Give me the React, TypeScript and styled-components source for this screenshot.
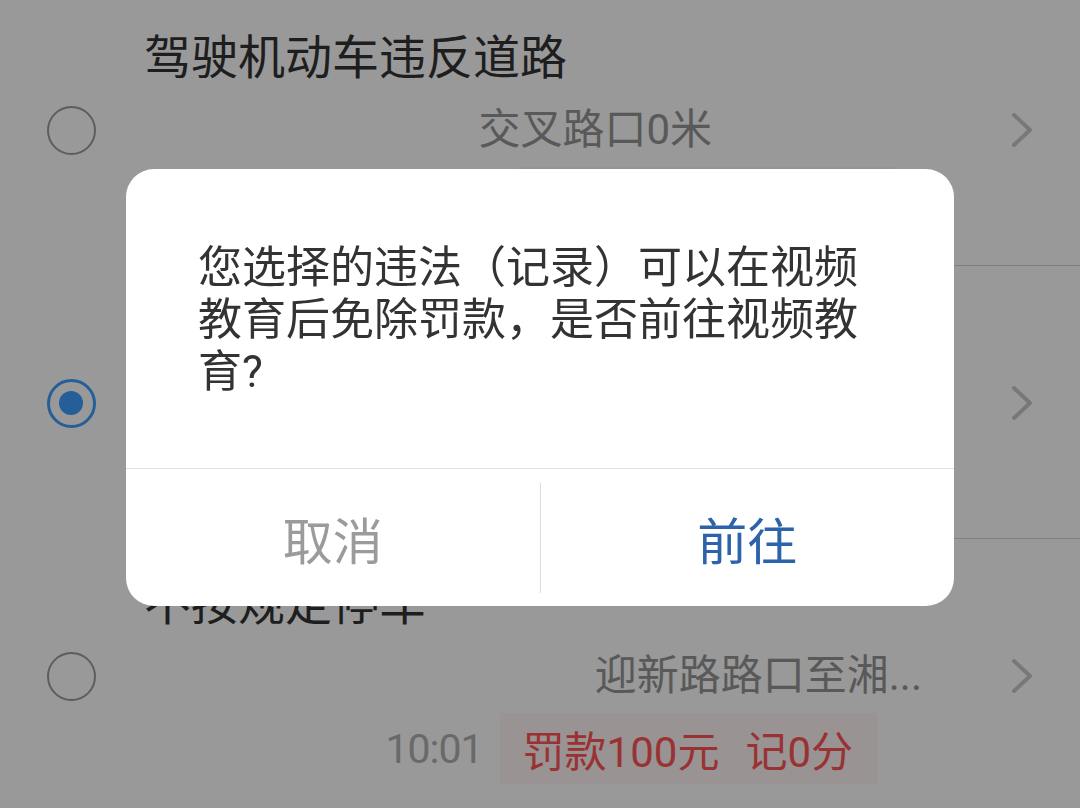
import styled, { createGlobalStyle } from "styled-components";

const GlobalStyle = createGlobalStyle`
  html, body {
    margin: 0;
    padding: 0;
    background: #fff;
    overflow: hidden;
  }
  body {
    font-family: Roboto, "Noto Sans CJK SC", sans-serif;
    -webkit-font-smoothing: antialiased;
  }
`;

type Violation = {
  title: string;
  location: string;
  locationTrail: number;
  time: string;
  fine: string;
  points: string;
  badgeTrail: number;
  selected?: boolean;
};

const violations: Violation[] = [
  {
    title: "驾驶机动车违反道路交通信号灯通行的",
    location: "交叉路口0米",
    locationTrail: 268,
    time: "09:47",
    fine: "罚款200元",
    points: "记6分",
    badgeTrail: 85,
  },
  {
    title: "机动车违反规定使用专用车道的",
    location: "芙蓉中路与五一大道交叉口",
    locationTrail: 58,
    time: "18:22",
    fine: "罚款100元",
    points: "记0分",
    badgeTrail: 102,
    selected: true,
  },
  {
    title: "不按规定停车",
    location: "迎新路路口至湘...",
    locationTrail: 58,
    time: "10:01",
    fine: "罚款100元",
    points: "记0分",
    badgeTrail: 102,
  },
];

const Page = styled.div`
  width: 100%;
  height: 100vh;
  overflow: hidden;
  background: #fff;
`;

const List = styled.ul`
  list-style: none;
  margin: -7px 0 0;
  padding: 0;
`;

const Item = styled.li`
  display: grid;
  grid-template-columns: 142px 1fr 100px;
  grid-template-rows: 63px 74px 71px;
  height: 273px;
  box-sizing: border-box;
  padding: 37px 0 28px;
  background: linear-gradient(#d6d6d6, #d6d6d6) no-repeat 142px 100% / calc(100% - 142px) 1px;
`;

const Title = styled.div`
  grid-column: 2 / 4;
  grid-row: 1;
  align-self: start;
  margin-left: 2px;
  max-width: 423px;
  font-size: 47px;
  line-height: 56px;
  color: #333;
  white-space: nowrap;
  overflow: hidden;
`;

const MainRow = styled.div`
  display: contents;
`;

const Radio = styled.span<{ $checked?: boolean }>`
  grid-column: 1;
  grid-row: 2;
  align-self: center;
  justify-self: center;
  width: 49px;
  height: 49px;
  box-sizing: border-box;
  border-radius: 50%;
  border: ${p => (p.$checked ? "3px solid #3f9dff" : "2.5px solid #9c9c9c")};
  display: flex;
  align-items: center;
  justify-content: center;

  &::after {
    content: "";
    display: ${p => (p.$checked ? "block" : "none")};
    width: 24px;
    height: 24px;
    border-radius: 50%;
    background: #3f9dff;
  }
`;

const Location = styled.div<{ $trail: number }>`
  grid-column: 2;
  grid-row: 2;
  align-self: center;
  justify-self: end;
  margin-right: ${p => p.$trail}px;
  font-size: 42px;
  line-height: 50px;
  color: #949494;
  white-space: nowrap;
`;

const Chevron = styled.svg`
  grid-column: 3;
  grid-row: 2;
  align-self: center;
  justify-self: start;
  margin-left: 31px;
  width: 22px;
  height: 36px;
`;

const BadgeRow = styled.div<{ $trail: number }>`
  grid-column: 2;
  grid-row: 3;
  display: flex;
  justify-content: flex-end;
  align-items: stretch;
  gap: 17px;
  margin-right: ${p => p.$trail}px;
`;

const Time = styled.span`
  display: flex;
  align-items: center;
  font-size: 41px;
  letter-spacing: -1px;
  color: #b0b0b0;
`;

const Badge = styled.span`
  box-sizing: border-box;
  padding: 0 25px 0 23px;
  display: flex;
  align-items: center;
  gap: 26px;
  background: #fff5f5;
  color: #ff5454;
  font-size: 42px;
  white-space: nowrap;
`;

const Overlay = styled.div`
  position: fixed;
  inset: 0;
  background: rgba(0, 0, 0, 0.4);
  display: flex;
  justify-content: center;
  align-items: center;
  padding-bottom: 33px;
  box-sizing: border-box;
`;

const Dialog = styled.div`
  width: 828px;
  background: #fff;
  border-radius: 28px;
  overflow: hidden;
`;

const Message = styled.p`
  margin: 0;
  padding: 73px 72px 70px;
  font-size: 44px;
  line-height: 52px;
  color: #333;
  border-bottom: 1px solid #e3e3e3;
`;

const Actions = styled.div`
  display: flex;
  padding: 14px 0 13px;
`;

const ActionButton = styled.button<{ $primary?: boolean }>`
  flex: 1;
  height: 110px;
  border: none;
  background: transparent;
  font-family: inherit;
  font-size: 50px;
  color: ${p => (p.$primary ? "#2c63aa" : "#9b9b9b")};
  cursor: pointer;

  & + & {
    border-left: 1px solid #dcdcdc;
  }
`;

const ChevronIcon = () => (
  <Chevron viewBox="0 0 22 36">
    <polyline points="3,3 19,18 3,33" fill="none" stroke="#c8c8c8" strokeWidth="4" strokeLinecap="round" strokeLinejoin="round" />
  </Chevron>
);

export default function App() {
  return (
    <Page>
      <GlobalStyle />
      <List>
        {violations.map((v, i) => (
          <Item key={i}>
            <Title>{v.title}</Title>
            <MainRow>
              <Radio $checked={v.selected} />
              <Location $trail={v.locationTrail}>{v.location}</Location>
              <ChevronIcon />
            </MainRow>
            <BadgeRow $trail={v.badgeTrail}>
              <Time>{v.time}</Time>
              <Badge>
                <span>{v.fine}</span>
                <span>{v.points}</span>
              </Badge>
            </BadgeRow>
          </Item>
        ))}
      </List>
      <Overlay>
        <Dialog>
          <Message>您选择的违法（记录）可以在视频教育后免除罚款，是否前往视频教育?</Message>
          <Actions>
            <ActionButton>取消</ActionButton>
            <ActionButton $primary>前往</ActionButton>
          </Actions>
        </Dialog>
      </Overlay>
    </Page>
  );
}
